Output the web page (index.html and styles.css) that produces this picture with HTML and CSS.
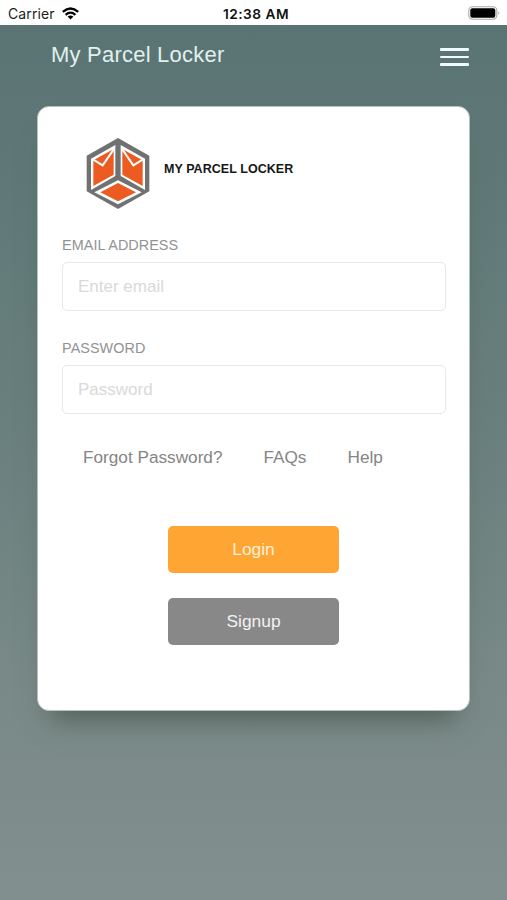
FILE: index.html
```html
<!DOCTYPE html>
<html lang="en">
<head>
<meta charset="utf-8">
<title>My Parcel Locker</title>
<link rel="stylesheet" href="styles.css">
</head>
<body>
<div class="status">
  <div class="carrier"><span>Carrier</span>
    <svg class="wifi" viewBox="0 0 17 13"><g fill="none" stroke="#000" stroke-width="2.3"><path d="M.8 4.9Q8.5-1.9 16.2 4.9"/><path d="M3.6 7.8Q8.5 3.5 13.4 7.8"/></g><path d="M5.6 9.5Q8.5 7.3 11.4 9.5L8.5 12.5Z"/></svg>
  </div>
  <div class="time">12:38 AM</div>
  <svg class="battery" viewBox="0 0 32 14"><rect x=".8" y=".8" width="28" height="12.4" rx="3.6" fill="#fff" stroke="#a9a9a9" stroke-width="1.1"/><rect x="2.3" y="2.3" width="25" height="9.4" rx="2"/><path d="M30.4 5.2Q32.2 7 30.4 8.8Z" fill="#999"/></svg>
</div>
<header class="header">
  <h1>My Parcel Locker</h1>
  <div class="menu"><i></i><i></i><i></i></div>
</header>
<main class="card">
  <div class="brand">
    <svg class="logo" viewBox="0 0 225 255">
      <path d="M114 24L208 77V184L114 237L20 184V77Z" fill="#707271"/>
      <path d="M33 86L106 45V138L33 180Z M122 45L195 86V180L122 138Z M114 151L185 187L114 223L43 187Z" fill="#fff"/>
      <path d="M40 91L101 57V134L40 168Z M127 57L188 91V168L127 134Z M114 159L168 187L114 214L61 187Z" fill="#eb5b22"/>
      <path d="M40 89L68 106L101 58M188 89L160 106L127 58" fill="none" stroke="#fff" stroke-width="6"/>
    </svg>
    <span>MY PARCEL LOCKER</span>
  </div>
  <label class="label" for="email">EMAIL ADDRESS</label>
  <input class="field" id="email" type="email" placeholder="Enter email">
  <label class="label second" for="password">PASSWORD</label>
  <input class="field" id="password" type="password" placeholder="Password">
  <nav class="links"><a>Forgot Password?</a><a>FAQs</a><a>Help</a></nav>
  <button class="btn login">Login</button>
  <button class="btn signup">Signup</button>
</main>
</body>
</html>
```
FILE: styles.css
```css
* { box-sizing: border-box; }
body {
  margin: 0;
  height: 900px;
  overflow: hidden;
  font-family: "Liberation Sans", Arial, sans-serif;
  background: linear-gradient(#5a7473 25px, #687f7d 400px, #7a8a88 700px, #818f8e 900px);
}
.status {
  display: grid;
  grid-template-columns: 1fr auto 1fr;
  align-items: center;
  height: 25px;
  padding: 1px 7px 0 8px;
  background: #fff;
  font-family: Inter, sans-serif;
  font-size: 14px;
  color: #1c1c1c;
}
.carrier { display: flex; align-items: center; gap: 7px; letter-spacing: .1px; }
.wifi { width: 17px; height: 13px; }
.time { padding: 2px 0 0 4px; font-size: 13.7px; font-weight: 600; letter-spacing: .5px; color: #111; }
.battery { width: 32px; height: 14px; justify-self: end; }
.header {
  display: flex;
  justify-content: space-between;
  height: 81px;
  padding: 17px 38px 0 51px;
}
h1 {
  margin: 0;
  font-size: 22px;
  line-height: 26px;
  font-weight: 400;
  letter-spacing: .22px;
  color: #e0f1ef;
}
.menu { display: flex; flex-direction: column; gap: 5px; width: 29px; padding-top: 6px; }
.menu i { height: 2.5px; border-radius: 1px; background: #f2fbfb; }
.card {
  display: flex;
  flex-direction: column;
  width: 433px;
  height: 605px;
  margin-left: 37px;
  padding: 23px 23.5px 0;
  border: 1px solid #b4c1bd;
  border-radius: 12px;
  background: #fff;
  box-shadow: 0 22px 26px -14px rgba(60, 70, 62, .65);
}
.brand {
  display: flex;
  align-items: center;
  gap: 9.5px;
  height: 85px;
  padding-left: 18px;
  font-size: 12.5px;
  font-weight: 700;
  color: #161616;
}
.brand span { margin-top: -7px; letter-spacing: .05px; }
.logo { width: 75px; height: 85px; }
.label { margin: 20px 0 0 .6px; font-size: 14.4px; line-height: 20px; letter-spacing: .05px; color: #929292; }
.label.second { margin-top: 27px; }
.field {
  height: 49px;
  margin-top: 7px;
  padding: 1px 15.5px 0;
  border: 1.5px solid #e8e8e8;
  border-radius: 5px;
  background: #fff;
  font: 17px "Liberation Sans", Arial, sans-serif;
}
.field::placeholder { color: #d9d9d9; opacity: 1; }
.links {
  display: flex;
  gap: 41px;
  margin: 33px 0 0 21.5px;
  font-size: 17.2px;
  line-height: 20px;
  color: #858585;
}
.btn {
  align-self: center;
  width: 171px;
  height: 47px;
  padding: 0;
  border: 0;
  border-radius: 5px;
  font: 17.4px "Liberation Sans", Arial, sans-serif;
}
.login { margin-top: 59px; background: #ffa534; color: #fff1d9; }
.signup { margin-top: 25px; background: #888; color: #f2f2f2; }
```
